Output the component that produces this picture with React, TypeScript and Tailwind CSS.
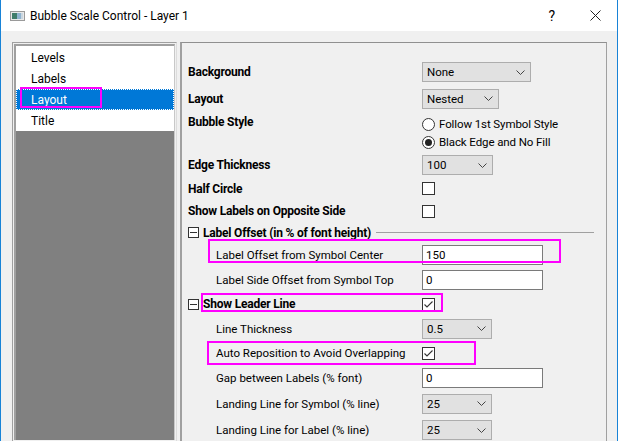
import type { ReactNode } from 'react';

const font = { fontFamily: 'Roboto, "Noto Sans", sans-serif' };

function Chevron() {
  return (
    <svg width="9" height="5" viewBox="0 0 9 5" className="shrink-0">
      <polyline points="0.5,0.5 4.5,4.5 8.5,0.5" fill="none" stroke="#444" strokeWidth="1" />
    </svg>
  );
}

function Dropdown({ value, width }: { value: string; width: string }) {
  return (
    <div className={`${width} h-[20px] flex items-center justify-between pl-[4px] pr-[5px] bg-[#e1e1e1] border border-[#adadad]`}>
      <span>{value}</span>
      <Chevron />
    </div>
  );
}

function TextBox({ value }: { value: string }) {
  return (
    <div className="w-[121px] h-[20px] flex items-center pl-[3px] bg-white border border-[#7a7a7a]">
      {value}
    </div>
  );
}

function CheckBox({ checked = false }: { checked?: boolean }) {
  return (
    <div className="w-[13px] h-[13px] bg-white border border-[#333] flex items-center justify-center">
      {checked && (
        <svg width="11" height="11" viewBox="0 0 11 11">
          <polyline points="1.5,5.5 4,8 9.5,2.5" fill="none" stroke="#333" strokeWidth="1.1" />
        </svg>
      )}
    </div>
  );
}

function Radio({ checked = false, label }: { checked?: boolean; label: string }) {
  return (
    <div className="h-[18px] flex items-center gap-[4px]">
      <div className="w-[13px] h-[13px] rounded-full bg-white border border-[#333] flex items-center justify-center">
        {checked && <div className="w-[7px] h-[7px] rounded-full bg-[#222]" />}
      </div>
      <span className="tracking-[-0.1px]">{label}</span>
    </div>
  );
}

function Bold({ children }: { children: ReactNode }) {
  return <span className="font-bold text-[12px] tracking-[-0.2px] whitespace-nowrap">{children}</span>;
}

function Row({
  h,
  label,
  bold = false,
  indent = false,
  children,
}: {
  h: string;
  label: string;
  bold?: boolean;
  indent?: boolean;
  children?: ReactNode;
}) {
  return (
    <div className={`${h} flex items-center`}>
      <div className={`w-[234px] shrink-0 whitespace-nowrap ${indent ? 'pl-[28px]' : ''}`}>
        {bold ? <Bold>{label}</Bold> : label}
      </div>
      {children}
    </div>
  );
}

function MinusBox() {
  return (
    <div className="w-[11px] h-[11px] shrink-0 border border-[#333] bg-white flex items-center justify-center mr-[4px]">
      <div className="w-[7px] h-px bg-[#333]" />
    </div>
  );
}

function TitleIcon() {
  return (
    <svg width="15" height="10" viewBox="0 0 15 10">
      <rect x="0.5" y="0.5" width="14" height="9" fill="#e8e8e8" stroke="#9a9a9a" />
      <rect x="2" y="2" width="5" height="6" fill="#3f7d6a" />
      <rect x="7" y="2" width="4" height="6" fill="#8fb3cf" />
      <rect x="11" y="2" width="2" height="6" fill="#c9d6e0" />
    </svg>
  );
}

const listItems = ['Levels', 'Labels', 'Layout', 'Title'];

export default function App() {
  return (
    <div
      className="relative w-[618px] h-[441px] overflow-hidden flex flex-col bg-[#f0f0f0] border-x border-[#1883d7] text-[11.5px] text-black leading-[16px]"
      style={font}
    >
      {/* Title bar */}
      <div className="h-[31px] shrink-0 bg-white flex items-center pl-[9px] pr-[16px]">
        <TitleIcon />
        <span className="ml-[5px] text-[12px]">Bubble Scale Control - Layer 1</span>
        <span className="ml-auto text-[14px] mr-[35px]">?</span>
        <svg width="11" height="11" viewBox="0 0 11 11">
          <path d="M0.5 0.5 L10.5 10.5 M10.5 0.5 L0.5 10.5" stroke="#222" strokeWidth="1" />
        </svg>
      </div>

      {/* Body */}
      <div className="flex-1 flex pt-[11px] pl-[11px] gap-[3px] min-h-0">
        {/* Page list */}
        <div className="w-[165px] border border-[#a0a0a0] border-r-[#dcdcdc] border-b-0 p-px flex">
          <div className="flex-1 flex flex-col border-l-2 border-t-2 border-[#a0a0a0] border-r border-r-[#c8c8c8] bg-[#808080]">
            <div className="bg-white flex flex-col pt-[1px] text-[12px]">
              {listItems.map((item) => (
                <div
                  key={item}
                  className={`h-[21px] flex items-center pl-[15px] ${
                    item === 'Layout' ? 'bg-[#0078d7] text-white outline-1 outline-dotted outline-white -outline-offset-1' : ''
                  }`}
                >
                  {item}
                </div>
              ))}
            </div>
          </div>
        </div>

        {/* Property grid */}
        <div className="w-[427px] border-l-2 border-t border-r border-[#a0a0a0] border-t-[#909090] pl-[6px] pt-[16px]">
          <Row h="h-[26px]" label="Background" bold>
            <Dropdown value="None" width="w-[109px]" />
          </Row>
          <Row h="h-[27px]" label="Layout" bold>
            <Dropdown value="Nested" width="w-[77px]" />
          </Row>
          <div className="h-[41px] flex items-start pt-[1px]">
            <div className="w-[234px] shrink-0 h-[18px] flex items-center">
              <Bold>Bubble Style</Bold>
            </div>
            <div className="mt-[2px] flex flex-col">
              <Radio label="Follow 1st Symbol Style" />
              <Radio label="Black Edge and No Fill" checked />
            </div>
          </div>
          <Row h="h-[24px]" label="Edge Thickness" bold>
            <Dropdown value="100" width="w-[71px]" />
          </Row>
          <Row h="h-[23px]" label="Half Circle" bold>
            <CheckBox />
          </Row>
          <Row h="h-[22px]" label="Show Labels on Opposite Side" bold>
            <CheckBox />
          </Row>
          <div className="h-[21px] flex items-center pr-[12px]">
            <MinusBox />
            <Bold>Label Offset (in % of font height)</Bold>
            <div className="ml-[5px] flex-1 h-px bg-[#a0a0a0]" />
          </div>
          <Row h="h-[24px]" label="Label Offset from Symbol Center" indent>
            <TextBox value="150" />
          </Row>
          <Row h="h-[25px]" label="Label Side Offset from Symbol Top" indent>
            <TextBox value="0" />
          </Row>
          <div className="h-[24px] flex items-center">
            <div className="w-[234px] shrink-0 flex items-center">
              <MinusBox />
              <Bold>Show Leader Line</Bold>
            </div>
            <CheckBox checked />
          </div>
          <Row h="h-[25px]" label="Line Thickness" indent>
            <Dropdown value="0.5" width="w-[70px]" />
          </Row>
          <Row h="h-[24px]" label="Auto Reposition to Avoid Overlapping" indent>
            <CheckBox checked />
          </Row>
          <Row h="h-[25px]" label="Gap between Labels (% font)" indent>
            <TextBox value="0" />
          </Row>
          <Row h="h-[27px]" label="Landing Line for Symbol (% line)" indent>
            <Dropdown value="25" width="w-[70px]" />
          </Row>
          <Row h="h-[26px]" label="Landing Line for Label (% line)" indent>
            <Dropdown value="25" width="w-[70px]" />
          </Row>
        </div>
      </div>

      {/* Annotation highlights */}
      <div className="absolute left-[19px] top-[87px] w-[82px] h-[21px] border-2 border-[#ff00ff]" />
      <div className="absolute left-[207px] top-[239px] w-[353px] h-[24px] border-2 border-[#ff00ff]" />
      <div className="absolute left-[200px] top-[293px] w-[242px] h-[19px] border-2 border-[#ff00ff]" />
      <div className="absolute left-[206px] top-[341px] w-[269px] h-[24px] border-2 border-[#ff00ff]" />
    </div>
  );
}
